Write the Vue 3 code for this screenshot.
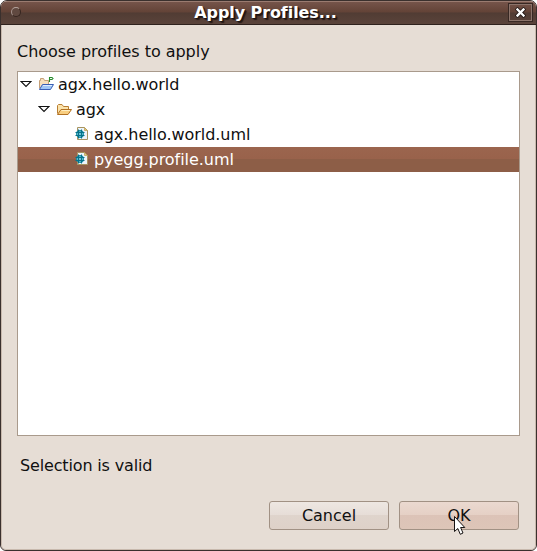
<script setup>
import { ref } from 'vue'

const rows = [
  { label: 'agx.hello.world', icon: 'project', depth: 0, open: true },
  { label: 'agx', icon: 'folder', depth: 1, open: true },
  { label: 'agx.hello.world.uml', icon: 'file', depth: 2 },
  { label: 'pyegg.profile.uml', icon: 'file', depth: 2 },
]
const selected = ref(3)
</script>

<template>
  <div class="window">
    <header class="titlebar">
      <span class="menu-dot"></span>
      <h1>Apply Profiles...</h1>
      <button class="close" aria-label="Close">
        <svg width="11" height="11" viewBox="0 0 11 11">
          <path d="M2.500 2.500L8.500 8.500M8.500 2.500L2.500 8.500" stroke="#241a17" stroke-width="4" stroke-linecap="square" />
          <path d="M2.500 2.500L8.500 8.500M8.500 2.500L2.500 8.500" stroke="#fff" stroke-width="2.300" stroke-linecap="square" />
        </svg>
      </button>
    </header>
    <main>
      <div class="prompt">Choose profiles to apply</div>
      <div class="tree">
        <div
          v-for="(row, i) in rows"
          :key="row.label"
          class="row"
          :class="['depth-' + row.depth, { selected: i === selected }]"
          @click="selected = i"
        >
          <span class="twist">
            <svg v-if="row.open" width="12" height="8" viewBox="0 0 12 8">
              <path d="M1 1.500H11L6 6.500Z" fill="#fff" stroke="#111" stroke-width="1.100" />
            </svg>
          </span>
          <svg v-if="row.icon === 'project'" class="icon" width="16" height="16" viewBox="0 0 16 16">
            <path d="M1.500 12.500V4.500H2.500V2.500H5.500L6.500 4.500H10.500V8" fill="#f6e0bc" stroke="#c5a078" />
            <path d="M1.500 13.500L4.500 8.500H15.500L12.500 13.500Z" fill="#9fc6f6" stroke="#3a5fb5" />
            <path d="M5 9.500H14" stroke="#dcecff" />
            <path d="M11.500 6V1.500H14L15 2.500L14 3.500H12" fill="#fff" stroke="#258a2b" stroke-width="1.100" />
          </svg>
          <svg v-else-if="row.icon === 'folder'" class="icon" width="16" height="16" viewBox="0 0 16 16">
            <path d="M1.500 12.500V4.500L2.500 3.500H6L7.500 5.500H12.500V8" fill="#fbe3ac" stroke="#b87e32" />
            <path d="M1.500 13.500L5 8.500H15.500L12 13.500Z" fill="#f8ce80" stroke="#b27122" />
            <path d="M5.500 9.500H14" stroke="#ffedbf" />
          </svg>
          <svg v-else class="icon" width="16" height="16" viewBox="0 0 16 16">
            <path d="M3.500 1.500H10.500L13.500 4.500V13.500H3.500Z" fill="#edf3fb" stroke="#a79461" />
            <path d="M10.500 1.500V4.500H13.500Z" fill="#e5c778" stroke="#b69b55" stroke-width=".7" />
            <circle cx="6" cy="8" r="3.400" fill="#69c3d6" stroke="#148da4" stroke-width="1.100" />
            <path d="M4.500 3.500V12.500M7.500 3.500V12.500M1.500 6.500H10.500M1.500 9.500H10.500" stroke="#07728b" />
          </svg>
          <span class="label">{{ row.label }}</span>
        </div>
      </div>
      <div class="status">Selection is valid</div>
      <footer>
        <button class="action">Cancel</button>
        <button class="action ok">OK
          <svg class="pointer" width="13" height="21" viewBox="0 0 13 21">
            <path d="M1.500 1.500V16.500L4.800 13.500L7.300 19.300L10 18L7.600 12.500H11.800Z" fill="#fff" stroke="#171313" />
          </svg>
        </button>
      </footer>
    </main>
  </div>
</template>

<style>
body { margin: 0; background: #fff; }
</style>

<style scoped>
.window {
  box-sizing: border-box;
  width: 537px;
  height: 551px;
  border: 1px solid #3a302d;
  border-radius: 7px 7px 6px 6px;
  overflow: hidden;
  background: #e6ddd5;
  font: 16px/25px "DejaVu Sans", sans-serif;
  color: #101010;
}
.titlebar {
  box-sizing: border-box;
  height: 24px;
  display: grid;
  grid-template-columns: 26px 1fr 28px;
  align-items: center;
  border-top: 1px solid #9a7b70;
  border-bottom: 1px solid #2e211d;
  background: linear-gradient(#75544a, #634337 45%, #513c34 50%, #5a433a);
}
h1 {
  margin: 0;
  padding-right: 4px;
  font-size: 16px;
  line-height: 20px;
  letter-spacing: -0.09px;
  text-align: center;
  color: #fff;
  text-shadow: 1px 1px 1px #1b1210, 2px 2px 1px #2b1d19;
}
.menu-dot {
  box-sizing: border-box;
  width: 10px;
  height: 10px;
  margin: 0 0 2px 10px;
  border: 1.5px solid #35251f;
  border-top-color: #b5a59e;
  border-left-color: #a5948d;
  border-radius: 50%;
  background: #604940;
}
.close {
  box-sizing: border-box;
  width: 25px;
  height: 19px;
  margin-bottom: 2px;
  padding: 0;
  display: grid;
  place-items: center;
  border: 1px solid #382823;
  box-shadow: inset 0 0 0 1px #8b736a;
  background: none;
}
main {
  box-sizing: border-box;
  height: 525px;
  padding: 14px 15px 19px 15px;
  display: flex;
  flex-direction: column;
  border: 1px solid #c8b9ad;
  border-top: 0;
  border-radius: 0 0 5px 5px;
}
.prompt { height: 32px; letter-spacing: -0.03px; }
.tree {
  box-sizing: border-box;
  height: 365px;
  border: 1px solid #a99a8c;
  background: #fff;
}
.row {
  height: 25px;
  display: flex;
  align-items: center;
}
.label { letter-spacing: -0.05px; }
.depth-0 { padding-left: 2px; }
.depth-1 { padding-left: 20px; }
.depth-2 { padding-left: 38px; }
.selected {
  color: #fff;
  background: linear-gradient(#9b654e 0, #99624b 48%, #8d5e47 50%, #8d5e47);
}
.twist { width: 18px; height: 8px; line-height: 0; }
.twist svg { margin: -1px 0 0 -0.5px; }
.icon { margin: -1px 4px 0 0; }
.status { margin: 17px 0 0 3px; height: 48px; letter-spacing: -0.15px; }
footer { display: flex; justify-content: flex-end; gap: 10px; padding-right: 1px; }
.action {
  box-sizing: border-box;
  position: relative;
  width: 120px;
  height: 29px;
  padding: 0;
  border: 1px solid #a19184;
  border-radius: 3px;
  font: inherit;
  color: inherit;
  background: linear-gradient(#eee7e2, #e6ddd7 48%, #dfd4cc 50%, #ded1c8);
}
.ok { background: linear-gradient(#ebd9d0, #e5d0c5 48%, #dcc3b7 50%, #ddc5b8); }
.pointer { position: absolute; left: 53px; top: 13px; }
</style>
